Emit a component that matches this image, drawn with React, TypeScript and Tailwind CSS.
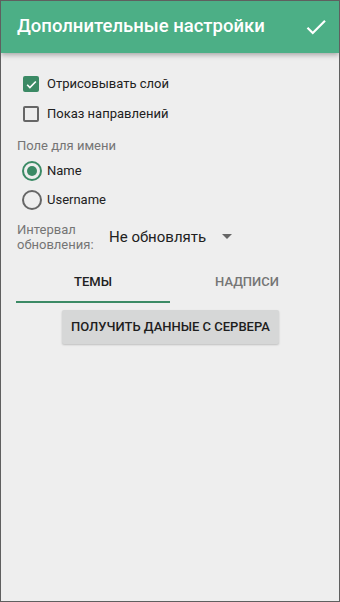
import React, { useState } from 'react';

export default function App() {
  const [drawLayer, setDrawLayer] = useState(true);
  const [showDirs, setShowDirs] = useState(false);
  const [nameField, setNameField] = useState<'name' | 'username'>('name');
  const [tab, setTab] = useState(0);

  return (
    <div
      className="w-[340px] h-[602px] border border-[#5f5f5f] bg-[#eeeeee] flex flex-col overflow-hidden"
      style={{ fontFamily: 'Roboto, "Noto Sans", sans-serif' }}
    >
      {/* Toolbar */}
      <div className="h-[52px] shrink-0 bg-[#4caf86] flex items-center justify-between pl-4 pr-[10px] shadow-[0_2px_5px_rgba(0,0,0,0.3)] z-10">
        <span className="text-white text-[18.5px] font-medium">Дополнительные настройки</span>
        <svg width="26" height="26" viewBox="0 0 24 24" className="text-white">
          <path d="M9 16.17L4.83 12l-1.42 1.41L9 19 21 7l-1.41-1.41z" fill="currentColor" />
        </svg>
      </div>

      <div className="flex flex-col pl-[21px] pr-[15px] pt-[16px]">
        {/* Checkboxes */}
        <label className="h-[30px] flex items-center gap-[8px] cursor-pointer" onClick={() => setDrawLayer(!drawLayer)}>
          <span className={`w-[16px] h-[16px] rounded-[2px] flex items-center justify-center ml-[1px] ${drawLayer ? 'bg-[#3b8a65]' : 'border-2 border-[#666]'}`}>
            {drawLayer && (
              <svg width="13" height="13" viewBox="0 0 24 24">
                <path d="M4 12.5l5 5L20 6.5" stroke="white" strokeWidth="3" fill="none" />
              </svg>
            )}
          </span>
          <span className="text-[13px] text-[#212121]">Отрисовывать слой</span>
        </label>
        <label className="h-[30px] flex items-center gap-[8px] cursor-pointer" onClick={() => setShowDirs(!showDirs)}>
          <span className={`w-[16px] h-[16px] rounded-[2px] flex items-center justify-center ml-[1px] ${showDirs ? 'bg-[#3b8a65]' : 'border-2 border-[#666]'}`}>
            {showDirs && (
              <svg width="13" height="13" viewBox="0 0 24 24">
                <path d="M4 12.5l5 5L20 6.5" stroke="white" strokeWidth="3" fill="none" />
              </svg>
            )}
          </span>
          <span className="text-[13px] text-[#212121]">Показ направлений</span>
        </label>

        <div className="h-[27px] flex items-end -ml-[5px] text-[13px] leading-[20px] text-[#757575]">Поле для имени</div>

        {/* Radios */}
        {(['name', 'username'] as const).map((v) => (
          <label key={v} className="h-[29px] flex items-center gap-[5px] cursor-pointer" onClick={() => setNameField(v)}>
            <span className={`w-[20px] h-[20px] rounded-full border-2 flex items-center justify-center ${nameField === v ? 'border-[#3b8a65]' : 'border-[#666]'}`}>
              {nameField === v && <span className="w-[10px] h-[10px] rounded-full bg-[#3b8a65]" />}
            </span>
            <span className="text-[13px] text-[#212121]">{v === 'name' ? 'Name' : 'Username'}</span>
          </label>
        ))}

        {/* Interval */}
        <div className="flex items-center mt-[6px] -ml-[5px] h-[34px]">
          <div className="text-[13px] leading-[15px] text-[#757575] w-[92px]">
            Интервал<br />обновления:
          </div>
          <span className="text-[15px] text-[#212121]">Не обновлять</span>
          <svg width="10" height="6" viewBox="0 0 10 6" className="ml-[16px]">
            <path d="M0 0h10L5 5z" fill="#666" />
          </svg>
        </div>
      </div>

      {/* Tabs */}
      <div className="flex mx-[15px] mt-[13px]">
        {['ТЕМЫ', 'НАДПИСИ'].map((t, i) => (
          <button
            key={t}
            onClick={() => setTab(i)}
            className={`flex-1 h-[36px] pb-[4px] flex items-center justify-center text-[13px] font-medium border-b-2 ${tab === i ? 'text-[#212121] border-[#3b8a65]' : 'text-[#757575] border-transparent'}`}
          >
            {t}
          </button>
        ))}
      </div>

      <div className="flex justify-center mt-[7px]">
        <button className="w-[217px] h-[34px] ml-[1px] bg-[#d6d7d7] rounded-[2px] shadow-[0_1px_2px_rgba(0,0,0,0.2)] text-[13px] font-medium text-[#1e1e1e]">
          ПОЛУЧИТЬ ДАННЫЕ С СЕРВЕРА
        </button>
      </div>
    </div>
  );
}
